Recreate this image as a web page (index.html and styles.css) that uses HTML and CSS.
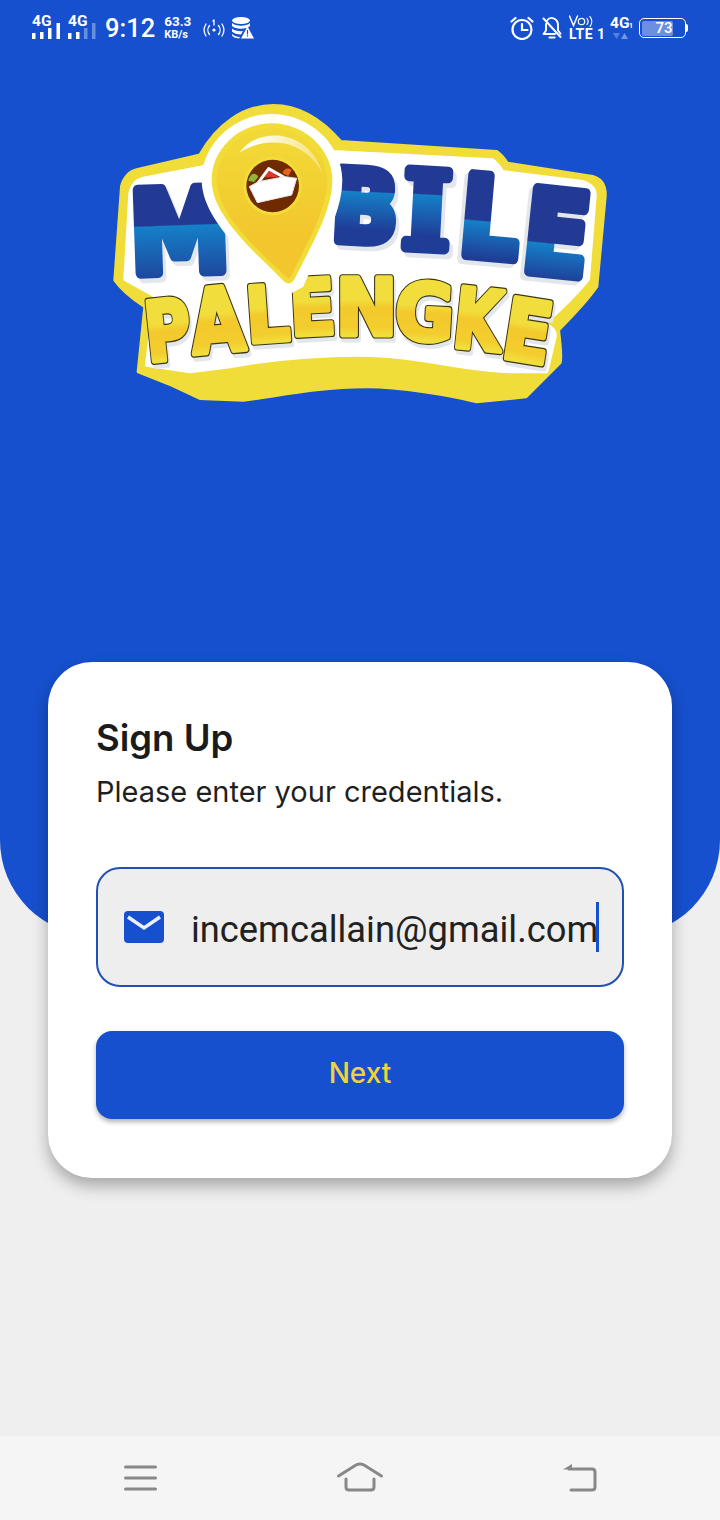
FILE: index.html
```html
<!DOCTYPE html>
<html lang="en">
<head>
    <meta charset="UTF-8">
    <meta name="viewport" content="width=device-width, initial-scale=1.0">
    <title>Sign Up</title>
    <link rel="stylesheet" href="styles.css">
</head>
<body>

    <div class="header">
        <!-- Status bar -->
        <div class="status-bar">
            <div class="status-left">
                <svg class="signal" width="28" height="24" viewBox="0 0 28 24">
                    <text x="0" y="10" class="net-label">4G</text>
                    <path fill="#fff" d="M0 17h3.500v6H0zM8 16h3.500v7H8zM16 12h3.500v11H16zM24.500 7H28v16h-3.500z"/>
                </svg>
                <svg class="signal" width="28" height="24" viewBox="0 0 28 24">
                    <text x="0" y="10" class="net-label">4G</text>
                    <path fill="#fff" d="M0 17h3.500v6H0zM8 16h3.500v7H8z"/>
                    <path fill="#fff" fill-opacity=".35" d="M16 12h3.500v11H16zM24 7h3.500v16H24z"/>
                </svg>
                <span class="clock">9:12</span>
                <div class="speed"><span class="speed-num">63.3</span><span class="speed-unit">KB/s</span></div>
                <svg width="22" height="20" viewBox="0 0 22 20" fill="none" stroke="#fff" stroke-width="1.300" stroke-linecap="round">
                    <circle cx="11" cy="12" r="1.600" fill="#fff" stroke="none"/>
                    <path d="M6.500 7.500a7 7 0 0 0 0 9M15.500 7.500a7 7 0 0 1 0 9M3 6a11 11 0 0 0 0 12M19 6a11 11 0 0 1 0 12"/>
                    <path d="M11 2v5M10 3l1-1"/>
                </svg>
                <svg width="22" height="22" viewBox="0 0 22 22">
                    <ellipse cx="9" cy="3.500" rx="9" ry="3.500" fill="#fff"/>
                    <path fill="#fff" d="M0 6c2 2 5 2.700 9 2.700S16 8 18 6v3c-2 2-5 2.700-9 2.700S2 11 0 9zM0 11.500c2 2 5 2.700 9 2.700l2-.2-2 3.500c-4 0-7-1-9-3zM0 17c2 2 5 3 8 3l-1 1.500c-4-.3-6-1.500-7-3z"/>
                    <path fill="#fff" d="M15.500 9.500L22 21.500H9z"/>
                    <path fill="#1650ce" d="M14.900 13h1.200v4.500h-1.200zM14.900 18.300h1.200v1.300h-1.200z"/>
                </svg>
            </div>
            <div class="status-right">
                <svg width="24" height="24" viewBox="0 0 24 24" fill="none" stroke="#fff" stroke-width="2.200" stroke-linecap="round">
                    <circle cx="12" cy="13.500" r="9.500"/>
                    <path d="M12 8v6h5.500M1.500 5.500L5.500 2M22.500 5.500L18.500 2"/>
                </svg>
                <svg width="20" height="24" viewBox="0 0 20 24" fill="none" stroke="#fff" stroke-width="1.900" stroke-linecap="round" stroke-linejoin="round">
                    <path d="M5 4.500C7 2 9.500 1.500 11.500 2.300c3 1 4.500 3.700 4.500 7v5l2.500 3.500M13 18H1.500L4 14.500V8M1.500 2.500L18.500 21"/>
                    <path d="M7.500 21.500h5" stroke-width="2.200"/>
                </svg>
                <div class="volte">
                    <svg width="24" height="12" viewBox="0 0 24 12" fill="none" stroke="#fff" stroke-width="1.200" stroke-linecap="round">
                        <path d="M.5 1l4 9.500L8.500 1" stroke-width="1.500"/>
                        <circle cx="12.500" cy="6.500" r="3.200"/>
                        <path d="M18 3.500a5 5 0 0 1 0 6M21 1.500a8 8 0 0 1 0 10"/>
                    </svg>
                    <span class="volte-label">LTE 1</span>
                </div>
                <svg class="net-right" width="24" height="24" viewBox="0 0 24 24">
                    <text x="0" y="12" class="net-label">4G</text>
                    <text x="19" y="12" class="net-sub">1</text>
                    <path fill="#fff" fill-opacity=".28" d="M3 17h7l-3.500 6z"/>
                    <path fill="#fff" fill-opacity=".4" d="M11 23h7l-3.500-6z"/>
                </svg>
                <div class="battery">
                    <div class="battery-body">
                        <div class="battery-fill">
                            <span class="battery-num">73</span>
                        </div>
                    </div>
                    <div class="battery-nub"></div>
                </div>
            </div>
        </div>

        <!-- Logo -->
        <svg class="logo" width="520" height="330" viewBox="0 0 1560 990">
            <defs>
                <linearGradient id="wave-low" x1="0" y1="0" x2="0" y2="1">
                    <stop offset=".44" stop-color="#233a94"/>
                    <stop offset=".45" stop-color="#1580c8"/>
                    <stop offset=".92" stop-color="#1f3c96"/>
                </linearGradient>
                <linearGradient id="wave-high" x1="0" y1="0" x2="0" y2="1">
                    <stop offset=".36" stop-color="#233a94"/>
                    <stop offset=".37" stop-color="#1580c8"/>
                    <stop offset=".7" stop-color="#1f3c96"/>
                </linearGradient>
                <linearGradient id="wave-mid" x1="0" y1="0" x2="0" y2="1">
                    <stop offset=".52" stop-color="#233a94"/>
                    <stop offset=".53" stop-color="#1580c8"/>
                    <stop offset=".82" stop-color="#1f3c96"/>
                </linearGradient>
                <linearGradient id="wave-e" x1="0" y1="0" x2="0" y2="1">
                    <stop offset=".57" stop-color="#233a94"/>
                    <stop offset=".58" stop-color="#1580c8"/>
                    <stop offset=".86" stop-color="#1f3c96"/>
                </linearGradient>
                <linearGradient id="sun" x1="0" y1="0" x2="0" y2="1">
                    <stop offset=".42" stop-color="#f1de3c"/>
                    <stop offset=".5" stop-color="#f3c92c"/>
                    <stop offset=".72" stop-color="#f3cd2e"/>
                    <stop offset=".8" stop-color="#f1de3c"/>
                </linearGradient>
                <linearGradient id="pin-fill" x1="0" y1="0" x2="0" y2="1">
                    <stop offset=".1" stop-color="#f2d836"/>
                    <stop offset=".75" stop-color="#f2c62c"/>
                </linearGradient>
                <linearGradient id="shine" x1="0" y1="0" x2="1" y2="0">
                    <stop offset=".2" stop-color="#fff" stop-opacity=".95"/>
                    <stop offset="1" stop-color="#fff" stop-opacity=".3"/>
                </linearGradient>

                <text id="l-m" class="logo-blue" transform="translate(243 545) rotate(-2) scale(.97 1.100)" text-anchor="middle">M</text>
                <text id="l-b" class="logo-blue" transform="translate(790 455) rotate(3) scale(.85 .96)" text-anchor="middle">B</text>
                <text id="l-i" class="logo-blue logo-slab" transform="translate(975 475) rotate(3) scale(1 1.030)" text-anchor="middle">I</text>
                <text id="l-l" class="logo-blue" transform="translate(1160 500) rotate(5) scale(.9 1.070)" text-anchor="middle">L</text>
                <text id="l-e" class="logo-blue" transform="translate(1358 550) rotate(6) scale(.93 1.100)" text-anchor="middle">E</text>

                <text id="p-1" class="logo-yellow" transform="translate(212 808) rotate(-6) scale(.78 1.030)" text-anchor="middle">P</text>
                <text id="p-2" class="logo-yellow" transform="translate(360 784) rotate(-5) scale(.86 1.100)" text-anchor="middle">A</text>
                <text id="p-3" class="logo-yellow" transform="translate(508 754) rotate(-4) scale(.85 .96)" text-anchor="middle">L</text>
                <text id="p-4" class="logo-yellow" transform="translate(642 734) rotate(-3) scale(.84 .96)" text-anchor="middle">E</text>
                <text id="p-5" class="logo-yellow" transform="translate(800 734) scale(.92 .98)" text-anchor="middle">N</text>
                <text id="p-6" class="logo-yellow" transform="translate(970 750) rotate(3) scale(.9 .98)" text-anchor="middle">G</text>
                <text id="p-7" class="logo-yellow" transform="translate(1125 776) rotate(6) scale(.77 1.030)" text-anchor="middle">K</text>
                <text id="p-8" class="logo-yellow" transform="translate(1270 812) rotate(9) scale(.87 1.050)" text-anchor="middle">E</text>
            </defs>

            <path fill="#f0dd3a" stroke="#f0dd3a" stroke-width="10" stroke-linejoin="round" d="M520 47C600 47 670 95 722 155L1190 185C1205 195 1212 205 1222 220L1478 260C1505 268 1517 290 1515 320L1490 590C1455 640 1405 690 1375 720C1380 760 1385 800 1380 818L1278 920L1130 935C1050 915 900 890 800 890C650 890 520 920 430 930L300 925L215 885L115 845L135 650C105 630 65 600 45 570L65 290C70 265 88 245 110 240L300 195C350 105 430 47 520 47Z"/>
            <path fill="#fff" stroke="#fff" stroke-width="10" stroke-linejoin="round" d="M520 80C590 80 650 125 698 185L1178 210C1192 220 1200 232 1208 245L1448 275C1475 284 1487 300 1485 320L1465 568C1425 618 1375 665 1335 700C1360 715 1367 725 1365 740L1340 845H1240C1100 845 950 795 780 795C620 795 470 815 390 830L270 845L140 825L165 618L75 568L90 310C95 285 108 270 130 265L313 230C363 135 440 80 520 80Z"/>

            <!-- letter shadows -->
            <g class="logo-shadow" transform="translate(10 14)">
                <use href="#l-m"/><use href="#l-b"/><use href="#l-i"/>
            </g>
            <g class="logo-shadow" transform="translate(-12 12)">
                <use href="#l-l"/><use href="#l-e"/>
            </g>
            <g class="logo-shadow-sm" transform="translate(6 12)">
                <use href="#p-1"/><use href="#p-2"/><use href="#p-3"/><use href="#p-4"/><use href="#p-5"/><use href="#p-6"/><use href="#p-7"/><use href="#p-8"/>
            </g>

            <!-- MOBILE -->
            <use href="#l-m" class="fill-low"/>
            <use href="#l-b" class="fill-high"/>
            <use href="#l-i" class="fill-high"/>
            <use href="#l-l" class="fill-mid"/>
            <use href="#l-e" class="fill-e"/>

            <!-- PALENGKE, dark edge first and the letter on top -->
            <g class="logo-edge">
                <use href="#p-1"/><use href="#p-2"/><use href="#p-3"/><use href="#p-4"/><use href="#p-5"/><use href="#p-6"/><use href="#p-7"/><use href="#p-8"/>
            </g>
            <g class="logo-sun">
                <use href="#p-1"/><use href="#p-2"/><use href="#p-3"/><use href="#p-4"/><use href="#p-5"/><use href="#p-6"/><use href="#p-7"/><use href="#p-8"/>
            </g>

            <!-- Pin -->
            <path fill="#fff" d="M515 72C400 72 305 165 305 270C305 390 450 510 535 600L570 612L610 590C650 490 727 380 727 270C727 165 630 72 515 72Z"/>
            <path fill="#f2dc38" d="M515 100C415 100 335 180 335 270C335 380 470 490 550 572Q570 592 585 565C620 490 697 370 697 270C697 180 615 100 515 100Z"/>
            <path fill="url(#pin-fill)" d="M515 115C425 115 350 190 350 270C350 375 480 485 555 558Q568 572 575 555C610 480 682 365 682 270C682 190 605 115 515 115Z"/>
            <path fill="url(#shine)" d="M418 188C450 145 500 132 545 138C605 147 650 190 668 250C640 200 600 170 550 160C505 152 460 162 418 188Z"/>
            <circle cx="518" cy="288" r="88" fill="#f2dc38"/>
            <circle cx="518" cy="288" r="79" fill="#6f2a00"/>
            <path fill="#e2352f" d="M492 262L510 240L535 262Z"/>
            <path fill="#8fb53c" d="M445 272C450 250 465 245 475 260L462 276Z"/>
            <path fill="#e8641e" d="M548 250C550 235 565 232 575 240L565 258Z"/>
            <path fill="none" stroke="#fff" stroke-width="9" stroke-linejoin="round" d="M475 278L506 236L552 262"/>
            <path fill="#fff" stroke="#e4e6ea" stroke-width="3" stroke-linejoin="round" d="M448 290L472 338L575 315L590 265L555 260L475 275Z"/>
        </svg>
    </div>

    <!-- Sign up card -->
    <div class="card">
        <h2 class="card-title">Sign Up</h2>
        <p class="card-text">Please enter your credentials.</p>

        <div class="email-field">
            <svg class="email-icon" width="40" height="32" viewBox="0 0 40 32">
                <rect width="40" height="32" rx="4" fill="#1650ce"/>
                <path d="M4 6l16 11L36 6" fill="none" stroke="#eef1fb" stroke-width="3.500"/>
            </svg>
            <div class="email-value">incemcallain@gmail.com</div>
            <div class="caret"></div>
        </div>

        <button class="next-btn">Next</button>
    </div>

    <div class="spacer"></div>

    <!-- Navigation bar -->
    <div class="nav-bar">
        <svg width="48" height="48" viewBox="0 0 48 48" class="nav-icon">
            <path d="M9.500 13h30M9.500 24h30M9.500 35h30"/>
        </svg>
        <svg width="48" height="48" viewBox="0 0 48 48" class="nav-icon">
            <path d="M2.500 22l17.500-11q4-2 8 0l17.500 11M10 25v8q0 3 3 3h22q3 0 3-3v-8"/>
        </svg>
        <svg width="48" height="48" viewBox="0 0 48 48" class="nav-icon">
            <path d="M13 15h23q3 0 3 3v15q0 3-3 3H15"/>
            <path class="nav-arrow" d="M7 15.500L16 10v5.500z"/>
        </svg>
    </div>

</body>
</html>
```
FILE: styles.css
```css
body {
    font-family: Roboto, sans-serif;
    background-color: #efefef;
    margin: 0;
    height: 1520px;
    display: flex;
    flex-direction: column;
    overflow: hidden;
}
.header {
    height: 936px;
    flex-shrink: 0;
    background-color: #1650ce;
    border-radius: 0 0 96px 96px;
}
.status-bar {
    height: 56px;
    box-sizing: border-box;
    padding: 0 32px;
    display: flex;
    justify-content: space-between;
    align-items: center;
    color: #fff;
}
.status-left, .status-right {
    display: flex;
    align-items: center;
}
.signal {
    margin-right: 8px;
    overflow: visible;
}
.net-right {
    overflow: visible;
}
.net-label {
    font-family: Roboto, sans-serif;
    font-size: 15.5px;
    font-weight: 700;
    fill: #fff;
}
.net-sub {
    font-family: Roboto, sans-serif;
    font-size: 7px;
    font-weight: 700;
    fill: #fff;
}
.clock {
    font-size: 25.5px;
    font-weight: 500;
    margin: 0 9px 0 1px;
}
.speed {
    display: flex;
    flex-direction: column;
    font-weight: 700;
    line-height: 13px;
    margin-right: 12px;
}
.speed-num {
    font-size: 13.5px;
}
.speed-unit {
    font-size: 11px;
}
.status-left svg:nth-of-type(3) {
    margin-right: 7px;
}
.status-right svg:nth-of-type(1) {
    margin-right: 8px;
}
.status-right svg:nth-of-type(2) {
    margin-right: 7px;
}
.volte {
    display: flex;
    flex-direction: column;
    margin-right: 7px;
    width: 34px;
}
.volte-label {
    font-size: 14px;
    font-weight: 700;
    line-height: 15px;
    letter-spacing: 0.5px;
    white-space: nowrap;
}
.battery {
    display: flex;
    align-items: center;
    margin-left: 5px;
}
.battery-body {
    width: 47px;
    height: 20px;
    box-sizing: border-box;
    border: 1.5px solid #fff;
    border-radius: 5px;
    padding: 1.5px;
}
.battery-fill {
    width: 31px;
    height: 100%;
    background-color: #6d8fdf;
    border-radius: 2px;
    display: flex;
    justify-content: flex-end;
    align-items: center;
}
.battery-num {
    font-size: 15px;
    font-weight: 500;
    color: #fff;
}
.battery-nub {
    width: 2px;
    height: 8px;
    background-color: #fff;
    border-radius: 0 2px 2px 0;
}
.logo {
    display: block;
    margin: 34px 0 0 100px;
}
.logo text {
    font-family: "DejaVu Sans", sans-serif;
    font-weight: 700;
    stroke-linejoin: round;
}
.logo text.logo-slab {
    font-family: "DejaVu Serif", serif;
}
.logo-blue {
    font-size: 310px;
    stroke-width: 30px;
}
.logo-yellow {
    font-size: 240px;
}
.fill-low { fill: url(#wave-low); stroke: url(#wave-low); }
.fill-high { fill: url(#wave-high); stroke: url(#wave-high); }
.fill-mid { fill: url(#wave-mid); stroke: url(#wave-mid); }
.fill-e { fill: url(#wave-e); stroke: url(#wave-e); }
.logo-shadow {
    fill: #e3e6ea;
    stroke: #e3e6ea;
}
.logo-shadow-sm {
    fill: #e3e6ea;
    stroke: #e3e6ea;
    stroke-width: 22px;
}
.logo-edge {
    fill: #3a3510;
    stroke: #3a3510;
    stroke-width: 22px;
}
.logo-sun {
    fill: url(#sun);
    stroke: url(#sun);
    stroke-width: 15px;
}
.card {
    margin: -274px 48px 0;
    height: 516px;
    flex-shrink: 0;
    box-sizing: border-box;
    padding: 48px;
    background-color: #fff;
    border-radius: 44px;
    box-shadow: 0 8px 16px rgba(0, 0, 0, 0.3);
    position: relative;
}
.card-title {
    font-family: Inter, sans-serif;
    font-size: 36.5px;
    font-weight: 600;
    line-height: 56px;
    color: #1b1b1b;
    margin: 0;
}
.card-text {
    font-family: Inter, sans-serif;
    font-size: 29px;
    line-height: 42px;
    color: #1f1f1f;
    margin: 5px 0 0;
}
.email-field {
    margin-top: 54px;
    height: 120px;
    box-sizing: border-box;
    padding: 0 24px 0 26px;
    display: flex;
    align-items: center;
    background-color: #eeeeee;
    border: 2px solid #2050b4;
    border-radius: 24px;
}
.email-icon {
    flex-shrink: 0;
    margin-right: 27px;
}
.email-value {
    font-size: 36.3px;
    color: #212121;
    white-space: nowrap;
    padding-top: 5px;
}
.caret {
    width: 3px;
    height: 50px;
    margin-left: -2px;
    background-color: #1650ce;
    flex-shrink: 0;
}
.next-btn {
    display: block;
    width: 100%;
    height: 88px;
    margin-top: 44px;
    padding-bottom: 5px;
    border: none;
    border-radius: 16px;
    background-color: #1650ce;
    color: #f0d23c;
    font-family: Inter, sans-serif;
    font-size: 28px;
    font-weight: 500;
    box-shadow: 0 3px 5px rgba(0, 0, 0, 0.3);
}
.spacer {
    flex: 1;
}
.nav-bar {
    height: 84px;
    flex-shrink: 0;
    background-color: #f5f5f5;
    padding: 0 116px;
    display: flex;
    justify-content: space-between;
    align-items: center;
}
.nav-icon {
    fill: none;
    stroke: #888888;
    stroke-width: 3px;
    stroke-linecap: round;
}
.nav-arrow {
    fill: #888888;
    stroke: none;
}
```
